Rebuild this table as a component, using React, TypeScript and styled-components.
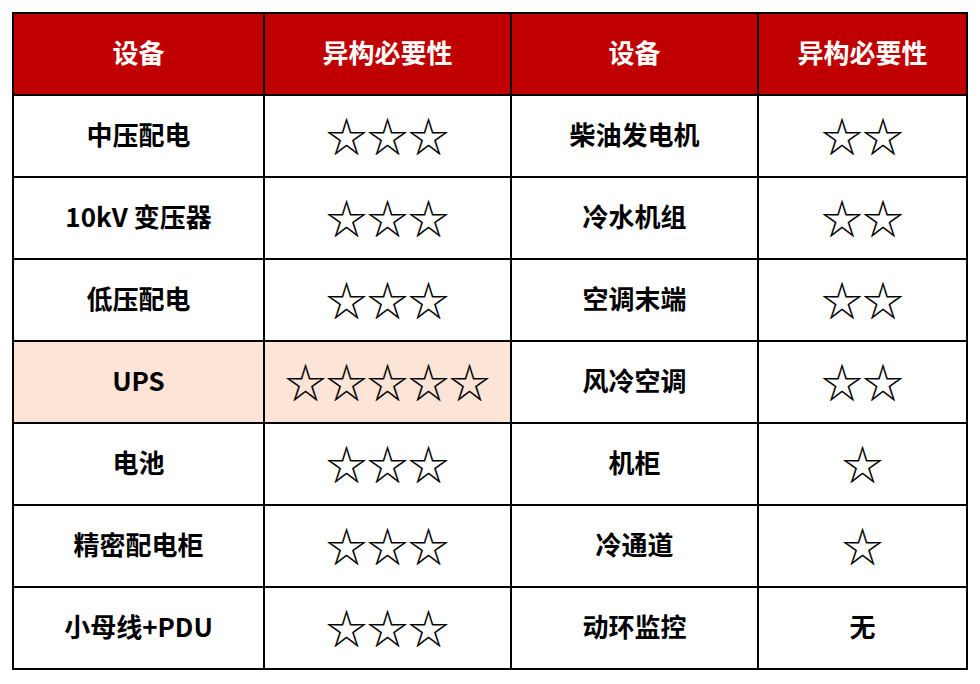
import React from 'react';
import styled, { createGlobalStyle } from 'styled-components';

const GlobalStyle = createGlobalStyle`
  html, body {
    margin: 0;
    padding: 0;
    background: #ffffff;
  }
  body {
    font-family: "Noto Sans CJK SC", "Noto Sans", sans-serif;
  }
`;

const Page = styled.div`
  padding: 12px 0 0 12px;
`;

const Grid = styled.div`
  display: grid;
  grid-template-columns: 249px 245px 245px 207px;
  grid-auto-rows: 80px;
  gap: 2px;
  padding: 2px;
  width: max-content;
  background: #000000;
`;

const Cell = styled.div<{ $head?: boolean; $hl?: boolean }>`
  display: flex;
  align-items: center;
  justify-content: center;
  padding-bottom: 4px;
  background: ${({ $head, $hl }) => ($head ? '#c00000' : $hl ? '#fce4d6' : '#ffffff')};
  color: ${({ $head }) => ($head ? '#ffffff' : '#000000')};
  font-size: 26px;
  font-weight: 700;
  line-height: 1;
`;

const Stars = styled.span`
  font-family: "Noto Sans CJK SC", "DejaVu Sans", sans-serif;
  font-size: 41px;
  font-weight: 400;
  line-height: 1;
`;

type Row = { a: string; as: number; b: string; bs: number | string; hl?: boolean };

const rows: Row[] = [
  { a: '中压配电', as: 3, b: '柴油发电机', bs: 2 },
  { a: '10kV 变压器', as: 3, b: '冷水机组', bs: 2 },
  { a: '低压配电', as: 3, b: '空调末端', bs: 2 },
  { a: 'UPS', as: 5, b: '风冷空调', bs: 2, hl: true },
  { a: '电池', as: 3, b: '机柜', bs: 1 },
  { a: '精密配电柜', as: 3, b: '冷通道', bs: 1 },
  { a: '小母线+PDU', as: 3, b: '动环监控', bs: '无' },
];

const rating = (v: number | string) =>
  typeof v === 'number' ? <Stars>{'☆'.repeat(v)}</Stars> : v;

export default function App() {
  return (
    <Page>
      <GlobalStyle />
      <Grid>
        <Cell $head>设备</Cell>
        <Cell $head>异构必要性</Cell>
        <Cell $head>设备</Cell>
        <Cell $head>异构必要性</Cell>
        {rows.map((r) => (
          <React.Fragment key={r.a}>
            <Cell $hl={r.hl}>{r.a}</Cell>
            <Cell $hl={r.hl}>{rating(r.as)}</Cell>
            <Cell>{r.b}</Cell>
            <Cell>{rating(r.bs)}</Cell>
          </React.Fragment>
        ))}
      </Grid>
    </Page>
  );
}
